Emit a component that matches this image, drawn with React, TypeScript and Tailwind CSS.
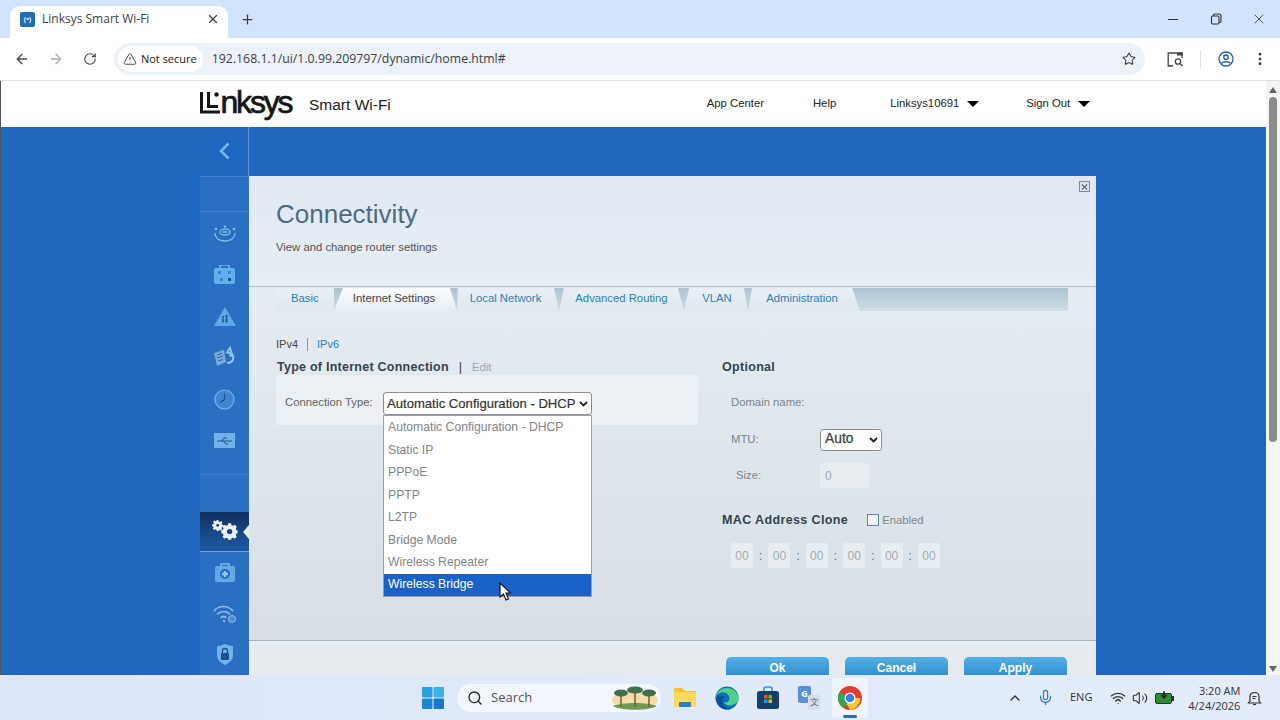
import { ArrowLeft, ArrowRight, ChevronUp, Mic, MoreVertical, Plus, RotateCw, Search, Star, TriangleAlert, Volume2, Wifi, X } from 'lucide-react'

const chromeFont = "font-['Open_Sans','Noto_Sans',sans-serif]"
const pageFont = "font-['Liberation_Sans',Arial,sans-serif]"

const options = ['Automatic Configuration - DHCP', 'Static IP', 'PPPoE', 'PPTP', 'L2TP', 'Bridge Mode', 'Wireless Repeater']

function TabStrip() {
  return (
    <div className={`${chromeFont} flex h-[38px] items-end bg-[#d3e3fd] pl-[10px]`}>
      <div className="flex h-[32px] w-[218px] items-center rounded-t-[10px] bg-white pb-[6px] pl-[10px] pr-[8px]">
        <div className="flex h-[15px] w-[15px] items-center justify-center rounded-[2px] bg-[#1d6fb5] text-[7px] font-bold leading-none text-white">
          (•)
        </div>
        <span className="ml-[7px] flex-1 text-[12px] text-[#3c4043]">Linksys Smart Wi-Fi</span>
        <X size={14} strokeWidth={2.2} className="text-[#3c4043]" />
      </div>
      <div className="ml-[12px] flex h-[32px] items-center pb-[6px]">
        <Plus size={15} strokeWidth={2} className="text-[#3c4043]" />
      </div>
      <div className="ml-auto flex h-[38px] items-center pr-[13px] text-[#333]">
        <div className="h-px w-[10px] bg-[#333]" />
        <svg className="ml-[32px]" width="12" height="12" viewBox="0 0 12 12" fill="none" stroke="#333" strokeWidth="1.1">
          <rect x="1.5" y="3" width="7.5" height="8" rx="1.2" />
          <path d="M3.5 3V2.2C3.5 1.5 4 1 4.7 1H9c1.1 0 2 .9 2 2v5.3c0 .7-.5 1.2-1.2 1.2H9" />
        </svg>
        <X size={16} strokeWidth={1.2} className="ml-[29px]" />
      </div>
    </div>
  )
}

function Toolbar() {
  return (
    <div className={`${chromeFont} flex h-[43px] items-center border-b border-[#dfe1e5] bg-white pl-[14px] pr-[12px]`}>
      <ArrowLeft size={16} strokeWidth={2} className="text-[#474a4f]" />
      <ArrowRight size={16} strokeWidth={2} className="ml-[18px] text-[#a9acb0]" />
      <RotateCw size={14} strokeWidth={2} className="ml-[19px] text-[#474a4f]" />
      <div className="ml-[17px] flex h-[32px] w-[1032px] items-center rounded-full bg-[#edf2fa] pl-[4px]">
        <div className="flex h-[26px] items-center gap-[4px] rounded-full bg-white pl-[5px] pr-[6px]">
          <TriangleAlert size={14} strokeWidth={1.6} className="text-[#3c4043]" />
          <span className="text-[11px] text-[#202124]">Not secure</span>
        </div>
        <span className="ml-[9px] text-[12.3px] text-[#3b3f43]">192.168.1.1/ui/1.0.99.209797/dynamic/home.html#</span>
        <Star size={14} strokeWidth={1.8} className="ml-auto mr-[9px] text-[#3c4043]" />
      </div>
      <svg className="ml-[22px]" width="17" height="15" viewBox="0 0 17 15" fill="none" stroke="#444" strokeWidth="1.3">
        <path d="M5 1H1.2v13H6" />
        <path d="M5 1h10v5" />
        <rect x="10" y="0.5" width="6" height="3" fill="#444" stroke="none" />
        <circle cx="11" cy="9.5" r="2.7" />
        <path d="M13 11.5l2.5 2.5" />
      </svg>
      <div className="ml-[16px] h-[18px] w-px bg-[#dfe3ea]" />
      <svg className="ml-[17px]" width="16" height="16" viewBox="0 0 16 16" fill="none" stroke="#1c5fa8" strokeWidth="1.3">
        <circle cx="8" cy="8" r="7" />
        <circle cx="8" cy="6.2" r="2.2" />
        <path d="M3.5 12.5c1.6-2.3 7.4-2.3 9 0" />
      </svg>
      <MoreVertical size={16} strokeWidth={2.4} className="ml-[18px] text-[#444]" />
    </div>
  )
}

function Logo() {
  return (
    <div className={`${pageFont} relative -mt-[4px] w-[93px] whitespace-nowrap text-[32px] leading-none tracking-[-2.2px] text-[#151515] [-webkit-text-stroke:0.7px_#151515]`}>
      <span className="text-transparent [-webkit-text-stroke:0]">Li</span>nksys
      <svg className="absolute left-0 top-[6px]" width="22" height="22" viewBox="0 0 22 22" fill="none" stroke="#151515" strokeWidth="3">
        <path d="M1.500 0V20H20" />
        <path d="M8.500 0V14.500H18" />
        <circle cx="16.500" cy="2.500" r="2.200" fill="#151515" stroke="none" />
      </svg>
    </div>
  )
}

function Caret() {
  return <span className="ml-[8px] mt-[2px] h-0 w-0 border-x-[6px] border-t-[6px] border-x-transparent border-t-black" />
}

function SiteHeader() {
  return (
    <div className={`${pageFont} flex h-[46px] items-center bg-white pl-[199px]`}>
      <Logo />
      <span className="ml-[16px] mt-[2px] text-[15.5px] text-[#222]">Smart Wi-Fi</span>
      <div className="ml-[316px] flex items-center pb-[2px] text-[11.3px] text-[#222]">
        <span>App Center</span>
        <span className="ml-[49px]">Help</span>
        <span className="ml-[54px]">Linksys10691</span>
        <Caret />
        <span className="ml-[47px]">Sign Out</span>
        <Caret />
      </div>
    </div>
  )
}

function SideIcon({ children, active }: { children: React.ReactNode; active?: boolean }) {
  return (
    <div className={`relative flex w-[49px] items-center justify-center ${active ? 'h-[41px] border-b border-[#6fa6e0] bg-gradient-to-b from-[#12325f] to-[#1c5aa6]' : 'h-[41.3px]'}`}>
      {children}
      {active && <span className="absolute right-0 top-[13px] h-0 w-0 border-y-[7px] border-r-[6px] border-y-transparent border-r-[#e6edf4]" />}
    </div>
  )
}

const stroke = '#7db9ea'

function Sidebar() {
  return (
    <div className="flex w-[49px] flex-col bg-[#2b6fc2]">
      <div className="flex h-[49px] items-center justify-center border-r border-[#5a92d4] bg-[#2067c0] pr-[1px]">
        <svg width="12" height="18" viewBox="0 0 12 18" fill="none" stroke="#78b6ec" strokeWidth="2.6">
          <path d="M10.500 1.500L3 9l7.500 7.500" />
        </svg>
      </div>
      <div className="h-[37px] border-y border-[#4580cd]" />
      <div className="mt-[1px] flex flex-col">
        <SideIcon>
          <svg width="24" height="18" viewBox="0 0 24 18" fill="none" stroke={stroke} strokeWidth="1.4">
            <path d="M2 8c0 4 3 8 10 8s10-4 10-8" />
            <ellipse cx="12" cy="7" rx="5" ry="3" />
            <path d="M9.500 7h5" strokeWidth="1.800" />
            <circle cx="3" cy="4" r="1.300" fill={stroke} stroke="none" />
            <circle cx="21" cy="4" r="1.300" fill={stroke} stroke="none" />
            <circle cx="12" cy="1.500" r="1.200" fill={stroke} stroke="none" />
          </svg>
        </SideIcon>
        <SideIcon>
          <svg width="23" height="20" viewBox="0 0 23 20">
            <rect x="7" y="0" width="9" height="4" fill="none" stroke={stroke} strokeWidth="1.5" />
            <rect x="1" y="3" width="21" height="16" rx="2" fill="#63b1ec" />
            <rect x="5" y="6" width="3" height="3" fill="#3f85cf" />
            <rect x="15" y="6" width="3" height="3" fill="#3f85cf" />
            <rect x="7" y="13" width="3" height="3" fill="#3f85cf" />
            <rect x="15" y="13" width="3" height="3" fill="#1d4f92" />
          </svg>
        </SideIcon>
        <SideIcon>
          <svg width="24" height="21" viewBox="0 0 24 21">
            <path d="M12 1l11 19H1z" fill="#5eaae6" />
            <circle cx="10" cy="11" r="1.100" fill="#1d4f92" />
            <circle cx="13.500" cy="10" r="1.200" fill="#1d4f92" />
            <path d="M9.200 12.500h1.600v4H9.200zM12.600 11.500h1.800v5h-1.800z" fill="#1d4f92" />
          </svg>
        </SideIcon>
        <SideIcon>
          <svg width="23" height="23" viewBox="0 0 23 23">
            <path d="M1 7l10-3 2 12-9 4z" fill="#7eaad8" />
            <path d="M4 9l5-1.500M4 12l6-2M5 15l5-1.500" stroke="#2a6dc0" strokeWidth="1" />
            <path d="M14 17c5 0 7-3 6-8M20 9l-3.500 1M17 2l-3 4.500 5 1.500z" fill="none" stroke="#8fc4ee" strokeWidth="2" />
          </svg>
        </SideIcon>
        <SideIcon>
          <svg width="21" height="21" viewBox="0 0 21 21">
            <circle cx="10.500" cy="10.500" r="9.500" fill="#3f85cf" stroke="#6fb0e6" strokeWidth="1.2" />
            <path d="M10.500 4.500v6l-4 3" fill="none" stroke="#1d4f92" strokeWidth="1.1" />
          </svg>
        </SideIcon>
        <SideIcon>
          <svg width="21" height="15" viewBox="0 0 21 15">
            <rect width="21" height="15" fill="#6fb3e9" />
            <path d="M3 8h15M7 8l3-3h3M9 8l3 3h2" fill="none" stroke="#1d4f92" strokeWidth="1" />
          </svg>
        </SideIcon>
      </div>
      <div className="h-[14px] border-b border-[#3f7cc9]" />
      <div className="h-[37px]" />
      <SideIcon active>
        <svg width="26" height="22" viewBox="0 0 26 22" fill="#e8eff6">
          <path d="M6 0h2l.4 1.800 1.500.6L11.500 1.400 13 2.900 12 4.500l.6 1.500 1.800.4v2l-1.800.4-.6 1.500 1 1.600-1.500 1.500-1.600-1-1.500.6L8 14H6l-.4-1.800-1.500-.6-1.600 1L1 11.100l1-1.600L1.400 8 0 7.600v-2l1.800-.4.6-1.500-1-1.600L2.900.600l1.600 1 1.100-.4z" transform="scale(.8)" />
          <circle cx="5.700" cy="5.300" r="1.400" fill="#173d73" />
          <path fillRule="evenodd" d="M16 5h3l.5 2 1.700.7 1.800-1.100 2 2-1.100 1.800.7 1.700 1.400.4v2.900l-1.400.4-.7 1.700 1.100 1.800-2 2-1.800-1.100-1.700.7-.5 1.400h-3l-.5-1.400-1.700-.7-1.800 1.100-2-2 1.100-1.800-.7-1.700-1.700-.4v-2.900l1.700-.4.700-1.700-1.100-1.800 2-2 1.800 1.100 1.700-.7zm1.500 6a2.800 2.800 0 100 5.600 2.800 2.800 0 000-5.600z" transform="translate(1 -1.500) scale(.95)" />
        </svg>
      </SideIcon>
      <SideIcon>
        <svg width="22" height="20" viewBox="0 0 22 20">
          <path d="M7 3V1h8v2" fill="none" stroke={stroke} strokeWidth="1.500" />
          <rect x="1" y="3" width="20" height="16" rx="2" fill="#63a9e4" />
          <circle cx="11" cy="11" r="5" fill="#2a6dc0" />
          <path d="M9.800 8h2.400v1.800H14v2.400h-1.800V14H9.800v-1.800H8V9.800h1.800z" fill="#8cc4ef" />
        </svg>
      </SideIcon>
      <SideIcon>
        <svg width="24" height="20" viewBox="0 0 24 20" fill="none" stroke="#8fb9e4" strokeWidth="1.700">
          <path d="M1 7c5-6 14-6 19 0M4 10.500c4-4 10-4 13 0M7.500 14c2-2 4-2 6 0" />
          <circle cx="11" cy="17" r="1.200" fill="#8fb9e4" stroke="none" />
          <circle cx="19" cy="15" r="3.500" fill="#4f8ed5" stroke="#8fb9e4" strokeWidth="1" />
        </svg>
      </SideIcon>
      <SideIcon>
        <svg width="18" height="21" viewBox="0 0 18 21">
          <path d="M1 2c3 0 5-1 8-2 3 1 5 2 8 2v9c0 5-4 8-8 10-4-2-8-5-8-10z" fill="#6fb3e9" />
          <rect x="5" y="9" width="8" height="7" rx="1" fill="#1d4f92" />
          <path d="M6.500 9V7a2.500 2.500 0 015 0v2" fill="none" stroke="#1d4f92" strokeWidth="1.300" />
        </svg>
      </SideIcon>
    </div>
  )
}

function Tabs() {
  const tabs = [
    { label: 'Local Network', w: 'w-[102px]', shape: 'pr-[5px] [clip-path:polygon(1px_0,calc(100%-5px)_0,100%_100%,0_100%)]' },
    { label: 'Advanced Routing', w: 'w-[125px]', shape: '[clip-path:polygon(5px_0,calc(100%-6px)_0,100%_100%,0_100%)]' },
    { label: 'VLAN', w: 'w-[64px]', shape: 'pl-[2px] [clip-path:polygon(5px_0,calc(100%-4px)_0,100%_100%,0_100%)]' },
    { label: 'Administration', w: 'w-[112px]', shape: 'pr-[4px] [clip-path:polygon(4px_0,calc(100%-8px)_0,100%_100%,0_100%)]' },
  ]
  return (
    <div className="ml-[28px] mt-[1px] flex h-[23px] w-[791px] bg-gradient-to-b from-[#aec4d1] to-[#cfdde6] pb-0 text-[11.3px]">
      <div className="flex w-[57px] items-center bg-gradient-to-b from-[#e9f0f5] to-[#dfe8ee] pb-[2px] pl-[14px] text-[#2d82b8]">Basic</div>
      <div className="flex w-[123px] items-center justify-center bg-gradient-to-b from-[#fbfcfd] to-[#e6edf2] pb-[2px] pr-[3px] text-[#444] [clip-path:polygon(9px_0,calc(100%-7px)_0,100%_100%,0_100%)]">
        Internet Settings
      </div>
      {tabs.map((t) => (
        <div key={t.label} className={`${t.w} flex items-center justify-center bg-gradient-to-b from-[#e9f0f5] to-[#dfe8ee] pb-[2px] text-[#2d82b8] ${t.shape}`}>
          {t.label}
        </div>
      ))}
    </div>
  )
}

function Chevron() {
  return (
    <svg width="9" height="6" viewBox="0 0 9 6" fill="none" stroke="#222" strokeWidth="1.800">
      <path d="M1 1l3.500 3.500L8 1" />
    </svg>
  )
}

function ConnectionColumn() {
  return (
    <div className="w-[422px]">
      <div className="flex h-[22px] items-center pl-[1px] text-[12.5px] font-bold text-[#36444f]">
        <span className="tracking-[0.25px]">Type of Internet Connection</span>
        <span className="ml-[10px] font-normal text-[#333]">|</span>
        <span className="ml-[10px] text-[11.3px] font-normal text-[#a0a8ae]">Edit</span>
      </div>
      <div className="relative -mt-[3px] flex h-[50px] items-start bg-[#ebf0f4] pl-[9px] pt-[22px]">
        <span className="text-[11.3px] leading-none text-[#666]">Connection Type:</span>
        <div className="absolute left-[107px] top-[17px] flex h-[23px] w-[209px] items-center justify-between rounded-[3px] border border-[#8a8f94] bg-white pl-[3px] pr-[3px] text-[13.100px] text-[#333]">
          <span className="whitespace-nowrap [-webkit-text-stroke:0.2px_#333]">Automatic Configuration - DHCP</span>
          <Chevron />
        </div>
        <div className="absolute left-[107px] top-[40px] z-10 w-[209px] border border-[#9aa0a6] bg-white text-[12.200px] text-[#808589]">
          {options.map((o) => (
            <div key={o} className="flex h-[22.500px] items-center pl-[4px]">{o}</div>
          ))}
          <div className="flex h-[22px] items-center bg-[#1a62c8] pl-[4px] text-white">Wireless Bridge</div>
          <svg className="absolute left-[115px] top-[166px]" width="12" height="19" viewBox="0 0 12 19">
            <path d="M1 1v14l3.500-3 2.500 6 2.500-1-2.500-6h4.500z" fill="#fff" stroke="#111" strokeWidth="1.100" />
          </svg>
        </div>
      </div>
    </div>
  )
}

function MacBox({ last }: { last?: boolean }) {
  return (
    <div className="flex items-center">
      <div className="flex h-[25px] w-[22px] items-center justify-center rounded-[2px] bg-[#e8edf1] text-[12px] text-[#a3abb1]">00</div>
      {!last && <span className="w-[15.400px] text-center text-[12px] text-[#666]">:</span>}
    </div>
  )
}

function OptionalColumn() {
  return (
    <div className="ml-[24px] flex-1">
      <div className="flex h-[22px] items-center text-[12.500px] font-bold tracking-[0.3px] text-[#36444f]">Optional</div>
      <div className="mt-[19px] pl-[9px] text-[11.3px] leading-none text-[#7d858b]">Domain name:</div>
      <div className="mt-[20px] flex h-[23px] items-center pl-[9px]">
        <span className="w-[89px] text-[11.3px] text-[#7d858b]">MTU:</span>
        <div className="flex h-[22px] w-[62px] items-center justify-between rounded-[3px] border border-[#8a8f94] bg-white pl-[3px] pr-[3px] text-[13.800px] text-[#444]">
          <span className="pl-[1px] [-webkit-text-stroke:0.3px_#444]">Auto</span>
          <Chevron />
        </div>
      </div>
      <div className="mt-[12px] flex h-[25px] items-center pl-[14px]">
        <span className="w-[84px] text-[11.3px] text-[#7d858b]">Size:</span>
        <div className="flex h-[25px] w-[50px] items-center rounded-[2px] bg-[#e7ecf0] pl-[5px] text-[12px] text-[#a3abb1]">0</div>
      </div>
      <div className="mt-[21px] flex h-[22px] items-center">
        <span className="text-[12.500px] font-bold tracking-[0.38px] text-[#36444f]">MAC Address Clone</span>
        <span className="ml-[19px] h-[12px] w-[12px] border border-[#5f8a9c] bg-[#f0f5f8]" />
        <span className="ml-[3px] text-[11.3px] text-[#7d858b]">Enabled</span>
      </div>
      <div className="ml-[9px] mt-[12px] flex">
        <MacBox /><MacBox /><MacBox /><MacBox /><MacBox /><MacBox last />
      </div>
    </div>
  )
}

function ActionButton({ label }: { label: string }) {
  return (
    <div className="flex h-[30px] w-[103px] justify-center rounded-t-[5px] bg-gradient-to-b from-[#52b0e6] to-[#1c7cc2] pt-[2px] text-[12px] font-bold text-white">
      {label}
    </div>
  )
}

function Panel() {
  return (
    <div className={`${pageFont} relative mt-[49px] flex h-[499px] w-[847px] flex-col overflow-hidden bg-gradient-to-b from-[#eaf0f5] to-[#d5dfe5]`}>
      <div className="h-[111px] border-b border-[#b6c1c9] bg-gradient-to-b from-[#e0e9f3] to-[#e6edf4] pl-[27px] pt-[23px]">
        <h1 className="text-[26px] leading-[30px] text-[#4f6b80]">Connectivity</h1>
        <p className="mt-[10px] text-[11.3px] leading-[16px] text-[#555]">View and change router settings</p>
        <div className="absolute right-[6px] top-[5px] flex h-[11px] w-[11px] items-center justify-center border border-[#7f8f9a] bg-[#dbe4ea]">
          <X size={10} strokeWidth={3} className="text-[#5d6f7c]" />
        </div>
      </div>
      <Tabs />
      <div className="ml-[27px] mt-[24px] flex h-[18px] items-center text-[11px]">
        <span className="text-[#444]">IPv4</span>
        <span className="ml-[9px] h-[13px] w-px bg-[#8c98a1]" />
        <span className="ml-[9px] text-[#2d82b8]">IPv6</span>
      </div>
      <div className="ml-[27px] mt-[3px] flex h-[264px] w-[800px] items-start">
        <ConnectionColumn />
        <OptionalColumn />
      </div>
      <div className="mt-auto h-[35px] border-t border-[#a9b4bb] bg-[#e6ebef]">
        <div className="flex justify-end gap-[16px] pr-[29px] pt-[16px]">
          <ActionButton label="Ok" />
          <ActionButton label="Cancel" />
          <ActionButton label="Apply" />
        </div>
      </div>
    </div>
  )
}

function Scrollbar() {
  return (
    <div className="flex w-[14px] flex-col items-center bg-[#f5f5f5] pt-[6px]">
      <span className="h-0 w-0 border-x-[4px] border-b-[6px] border-x-transparent border-b-[#666]" />
      <div className="mt-[4px] h-[345px] w-[8px] rounded-full bg-[#8b8b8b]" />
      <span className="mb-[3px] mt-auto h-0 w-0 border-x-[4px] border-t-[6px] border-x-transparent border-t-[#666]" />
    </div>
  )
}

function Page() {
  return (
    <div className="flex h-[594px] overflow-hidden border-l border-[#555]">
      <div className="flex flex-1 flex-col">
        <SiteHeader />
        <div className="flex h-[548px] overflow-hidden bg-[#2067c0] pl-[199px]">
          <Sidebar />
          <Panel />
        </div>
      </div>
      <Scrollbar />
    </div>
  )
}

function Taskbar() {
  return (
    <div className={`${chromeFont} flex h-[45px] items-center bg-gradient-to-r from-[#dde7f8] to-[#e3ecf8]`}>
      <svg className="ml-[422px]" width="22" height="22" viewBox="0 0 22 22">
        <rect width="10.500" height="10.500" rx="1" fill="#2aa0e0" />
        <rect x="11.500" width="10.500" height="10.500" rx="1" fill="#3fb2ea" />
        <rect y="11.500" width="10.500" height="10.500" rx="1" fill="#1c86d0" />
        <rect x="11.500" y="11.500" width="10.500" height="10.500" rx="1" fill="#1a78c8" />
      </svg>
      <div className="ml-[13px] flex h-[28px] w-[204px] items-center rounded-full bg-[#f3f6fc] pl-[10px]">
        <Search size={16} strokeWidth={2} className="text-[#222]" />
        <span className="ml-[8px] text-[13px] text-[#555]">Search</span>
        <svg className="ml-auto mr-[2px]" width="48" height="26" viewBox="0 0 48 26">
          <ellipse cx="24" cy="15" rx="23" ry="9" fill="#f3dca6" />
          <path d="M2 21c10-4 34-4 44 0-8 5-36 5-44 0z" fill="#6e9a52" />
          <path d="M10 22V10M24 22V6M38 22V10" stroke="#7a5a36" strokeWidth="1.500" />
          <ellipse cx="10" cy="8" rx="7" ry="3.500" fill="#3f6f4b" />
          <ellipse cx="24" cy="5" rx="8" ry="3.500" fill="#3f6f4b" />
          <ellipse cx="38" cy="8" rx="7" ry="3.500" fill="#3f6f4b" />
        </svg>
      </div>
      <svg className="ml-[12px]" width="24" height="21" viewBox="0 0 24 21">
        <path d="M1 2a1 1 0 011-1h7l3 3h10a1 1 0 011 1v14a1 1 0 01-1 1H2a1 1 0 01-1-1z" fill="#f4c430" />
        <rect x="1" y="5" width="22" height="15" fill="#fbd961" />
        <rect x="6" y="15" width="12" height="5" rx="1" fill="#2b7fc4" />
      </svg>
      <svg className="ml-[18px]" width="24" height="24" viewBox="0 0 24 24">
        <circle cx="12" cy="12" r="11.500" fill="#0f6fb5" />
        <path d="M23.500 13c0-6-4.500-11-11-11C6.500 2 2 5.500 1 10c2-3 5.500-4 8-3.500 5 1 6.500 5 5 8-1 2-4 2.500-5.500 1 1 3 5 5 9 3.500 3-1 6-3 6.500-6.500z" fill="#4fd08a" />
        <path d="M1 12c0 6 5 11.500 11 11.500 2 0 4-.5 5-1.500-4 1-9-1-9.500-6-.3-3 1.500-5 2-5.500C6 9 2 10 1 12z" fill="#0c4f99" />
      </svg>
      <svg className="ml-[18px]" width="22" height="24" viewBox="0 0 22 24">
        <path d="M7 6V3a2 2 0 012-2h4a2 2 0 012 2v3" fill="none" stroke="#2a9ad6" strokeWidth="1.600" />
        <rect y="5" width="22" height="18" rx="2.500" fill="#143f66" />
        <rect x="7" y="9" width="3.500" height="3.500" fill="#f25022" />
        <rect x="11.500" y="9" width="3.500" height="3.500" fill="#7fba00" />
        <rect x="7" y="13.500" width="3.500" height="3.500" fill="#00a4ef" />
        <rect x="11.500" y="13.500" width="3.500" height="3.500" fill="#ffb900" />
      </svg>
      <div className="relative ml-[19px] h-[24px] w-[22px]">
        <div className="absolute left-0 top-0 flex h-[17px] w-[13px] items-center justify-center rounded-[2px] bg-[#5b8fe0] text-[9px] font-bold text-white">G</div>
        <div className="absolute bottom-0 right-0 flex h-[15px] w-[12px] items-center justify-center rounded-[2px] bg-[#d7dde8] text-[9px] text-[#667]">文</div>
      </div>
      <div className="relative ml-[12px] flex h-[40px] w-[36px] items-center justify-center rounded-[4px] bg-[#f0f4fc]">
        <svg width="24" height="24" viewBox="0 0 24 24">
          <circle cx="12" cy="12" r="12" fill="#e33b2e" />
          <path d="M12 12L1.600 18A12 12 0 0 1 1.600 6z" fill="#2da94f" />
          <path d="M12 12l10.400 0A12 12 0 0 1 12 24L6.800 15z" fill="#fcc934" />
          <path d="M12 12L6 22.400A12 12 0 0 1 1.600 18z" fill="#2da94f" />
          <circle cx="12" cy="12" r="5.500" fill="#fff" />
          <circle cx="12" cy="12" r="4.300" fill="#3b7ddd" />
        </svg>
        <span className="absolute bottom-0 h-[3px] w-[14px] rounded-full bg-[#2a6cb0]" />
      </div>
      <ChevronUp size={16} strokeWidth={2} className="ml-[139px] text-[#333]" />
      <Mic size={17} strokeWidth={1.700} className="ml-[14px] text-[#3f78c4]" />
      <span className="ml-[16px] text-[11px] text-[#333]">ENG</span>
      <Wifi size={16} strokeWidth={2} className="ml-[18px] text-[#333]" />
      <Volume2 size={16} strokeWidth={1.600} className="ml-[6px] text-[#333]" />
      <svg className="ml-[7px]" width="19" height="13" viewBox="0 0 19 13">
        <rect x="0.500" y="2.500" width="16" height="10" rx="1.500" fill="#2f8f2f" stroke="#234" strokeWidth="1" />
        <rect x="17" y="5" width="2" height="5" fill="#234" />
        <path d="M9 0v6M6.500 4L9 7l2.500-3" fill="none" stroke="#111" strokeWidth="1.300" />
      </svg>
      <div className="ml-[8px] flex w-[58px] flex-col items-end text-[11px] leading-[15px] text-[#333]">
        <span>3:20 AM</span>
        <span>4/24/2026</span>
      </div>
      <svg className="ml-[7px]" width="15" height="16" viewBox="0 0 15 16" fill="none" stroke="#333" strokeWidth="1.200">
        <path d="M3 11V6.500C3 4 5 2.500 7.500 2.500S12 4 12 6.500V11l1.500 2h-12z" />
        <path d="M6 14.500h3" />
        <path d="M5.500 6.500h4M5.500 8.500h3" />
      </svg>
    </div>
  )
}

export default function App() {
  return (
    <div className="h-[720px] w-[1280px] overflow-hidden bg-white">
      <TabStrip />
      <Toolbar />
      <Page />
      <Taskbar />
    </div>
  )
}
